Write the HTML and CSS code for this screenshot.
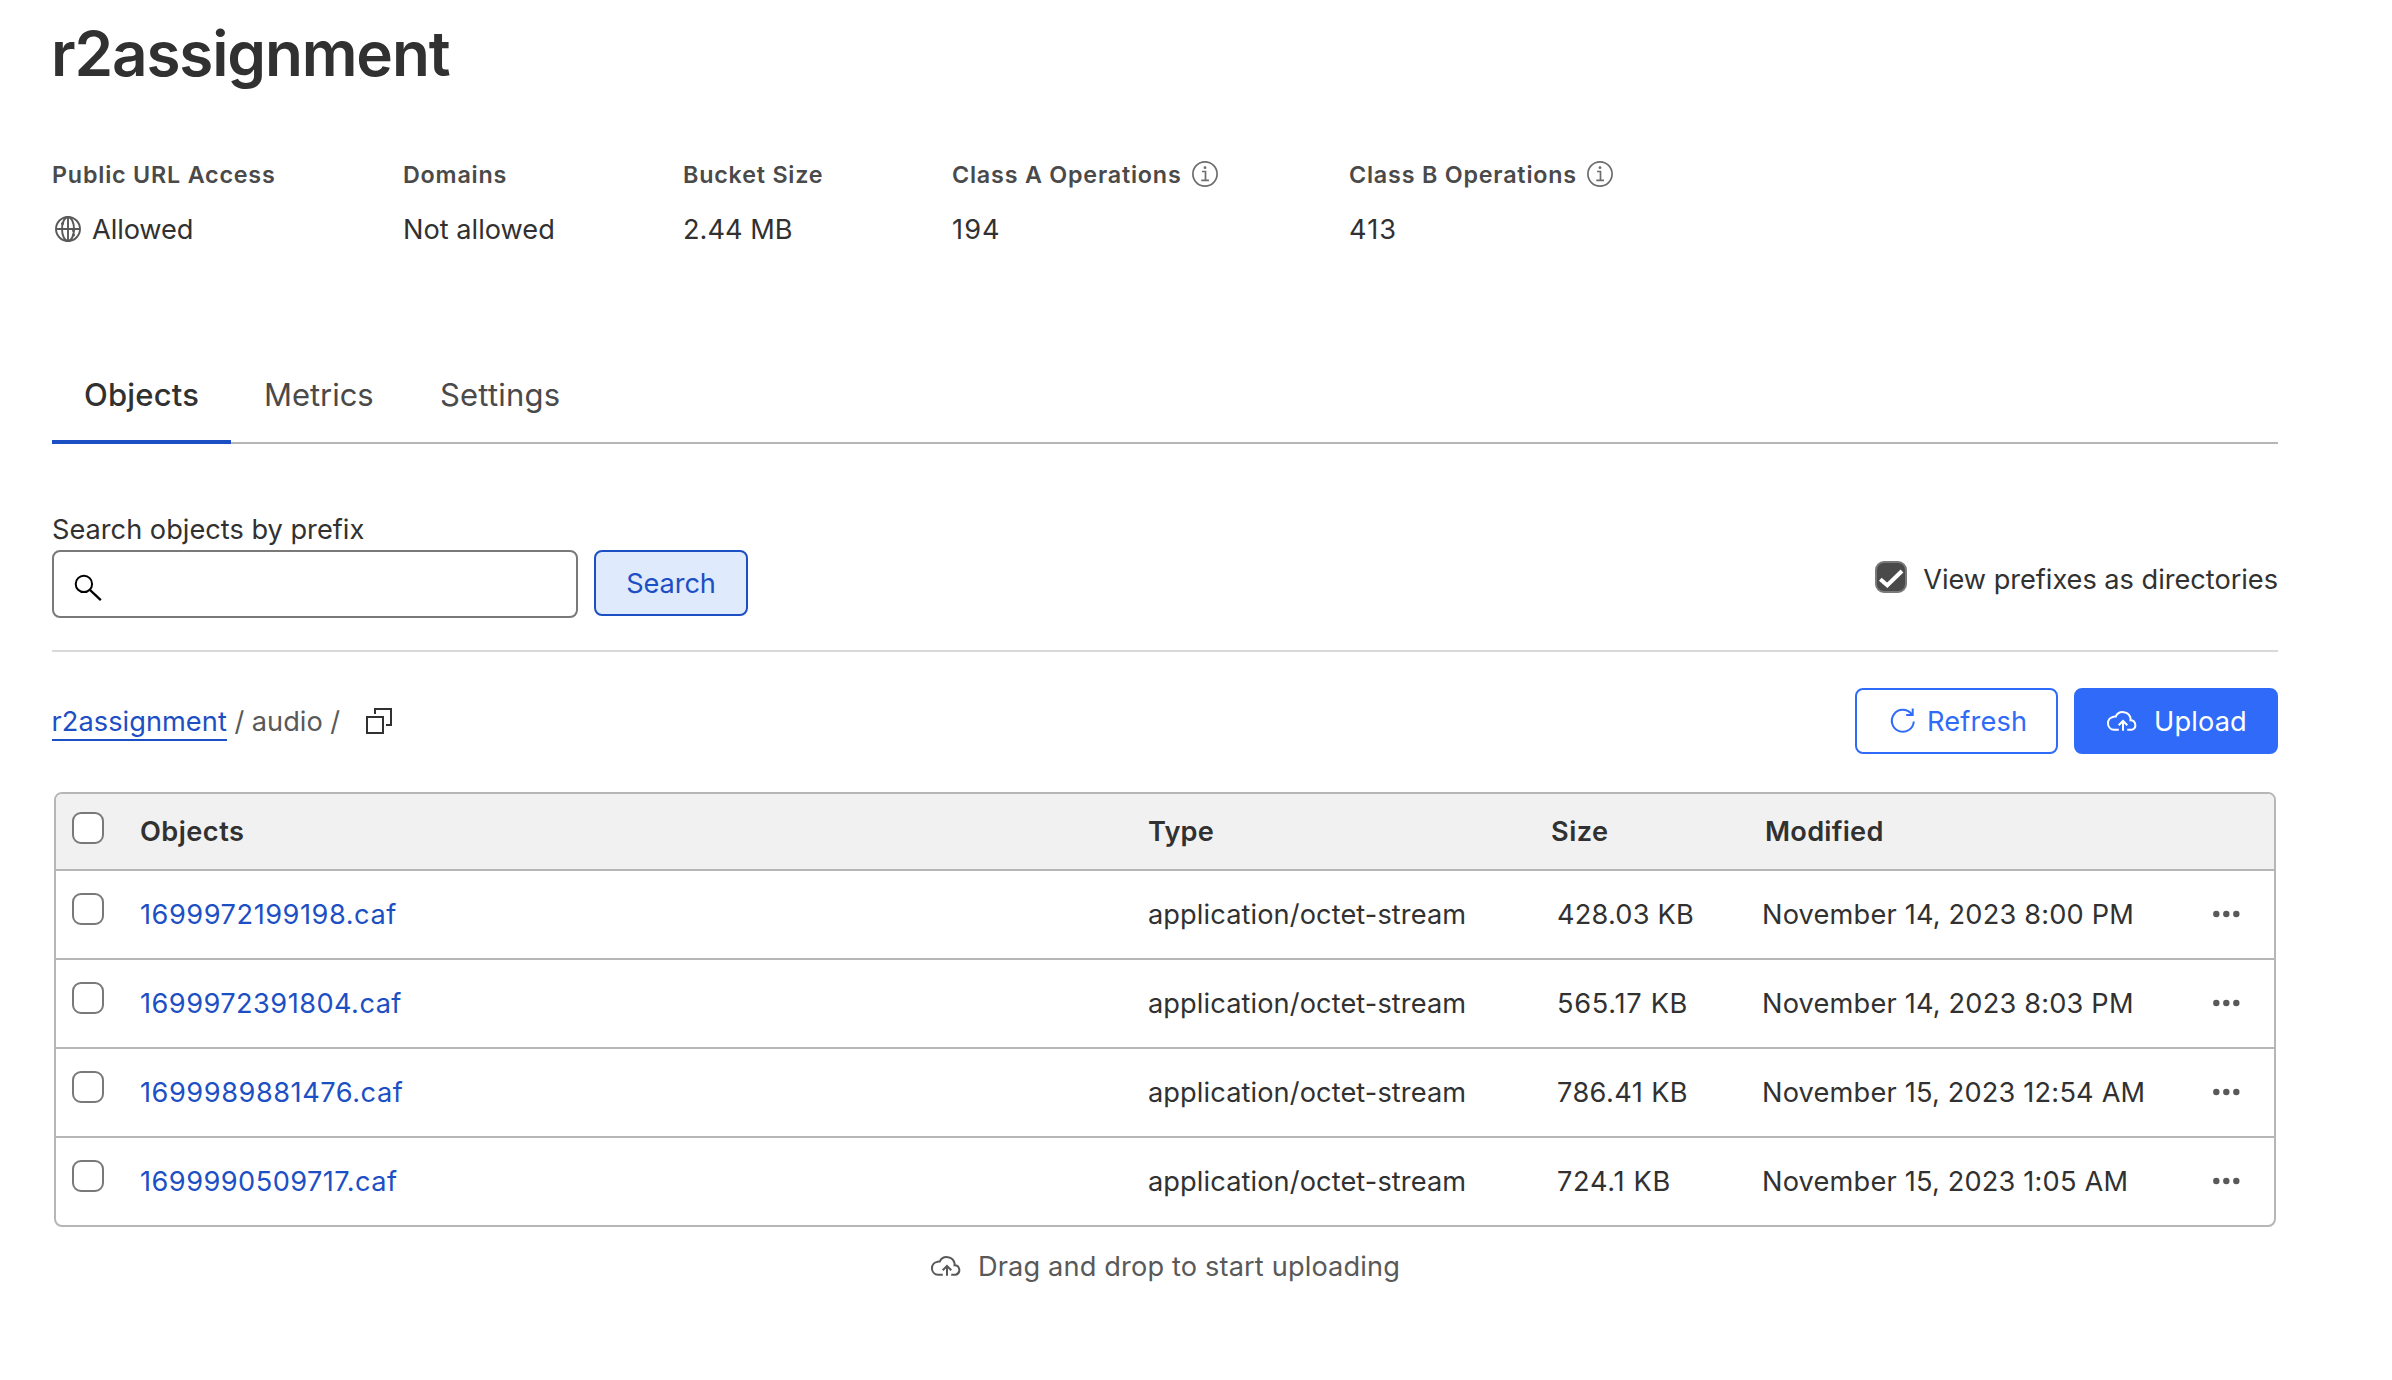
FILE: index.html
```html
<!DOCTYPE html>
<html lang="en">
<head>
<meta charset="utf-8">
<title>r2assignment</title>
<link rel="stylesheet" href="styles.css">
</head>
<body>
<svg class="defs" width="0" height="0" aria-hidden="true">
  <symbol id="cloud" viewBox="0 0 32 22">
    <path d="M12.800 19.800H8A6.600 6.600 0 0 1 7.600 6.700Q9 6.500 9.700 6.600A7.900 7.900 0 0 1 24.600 8.600L24.500 10.200A4.900 4.900 0 0 1 25.800 19.800H21.200M17 20.700V11M12.700 15.300L17 11L21.300 15.300" fill="none" stroke="currentColor" stroke-width="2"/>
  </symbol>
  <symbol id="info" viewBox="0 0 26 26">
    <circle cx="13" cy="13" r="12.100" fill="none" stroke="currentColor" stroke-width="1.700"/>
    <path d="M10 10.500H13.500V19.300M9.300 19.300H17" fill="none" stroke="currentColor" stroke-width="1.700"/>
    <circle cx="13" cy="6.700" r="1.400" fill="currentColor"/>
  </symbol>
  <symbol id="dots" viewBox="0 0 28 8">
    <g fill="currentColor"><circle cx="3.300" cy="4" r="3.200"/><circle cx="13.300" cy="4" r="3.200"/><circle cx="23.300" cy="4" r="3.200"/></g>
  </symbol>
</svg>
<main class="page">
  <h1 class="title">r2assignment</h1>

  <dl class="stats">
    <div class="stat"><dt>Public URL Access</dt>
      <dd class="with-globe"><svg class="globe" viewBox="0 0 26 26"><g fill="none" stroke="currentColor" stroke-width="1.900"><circle cx="13" cy="13" r="12"/><ellipse cx="13" cy="13" rx="6" ry="12"/><path d="M13 1V25M1 13H25"/></g><g fill="currentColor"><circle cx="7.500" cy="7.500" r="1.500"/><circle cx="18.500" cy="14.500" r="1.500"/><circle cx="18.500" cy="19" r="1.500"/></g></svg>Allowed</dd></div>
    <div class="stat"><dt>Domains</dt><dd>Not allowed</dd></div>
    <div class="stat"><dt>Bucket Size</dt><dd>2.44 MB</dd></div>
    <div class="stat"><dt>Class A Operations <svg class="info"><use href="#info"/></svg></dt><dd class="count">194</dd></div>
    <div class="stat"><dt>Class B Operations <svg class="info"><use href="#info"/></svg></dt><dd class="count">413</dd></div>
  </dl>

  <nav class="tabs">
    <a class="tab active">Objects</a>
    <a class="tab metrics">Metrics</a>
    <a class="tab">Settings</a>
  </nav>

  <section class="search">
    <div class="search-main">
      <label class="search-label" for="prefix">Search objects by prefix</label>
      <div class="search-row">
        <div class="field">
          <svg class="lens" viewBox="0 0 28 28"><g fill="none" stroke="currentColor" stroke-width="2"><circle cx="9.900" cy="9.900" r="8.200"/><path d="M15.500 15.500L26.800 26.200" stroke-width="2.400"/></g></svg>
          <input id="prefix" class="field-input" type="text">
        </div>
        <button class="btn btn-search">Search</button>
      </div>
    </div>
    <label class="toggle">
      <span class="check checked"><svg viewBox="0 0 28 28"><path d="M3.300 16.300L10.300 22.300L25 8" fill="none" stroke="#fff" stroke-width="4"/></svg></span>
      <span class="toggle-text">View prefixes as directories</span>
    </label>
  </section>

  <div class="actions">
    <div class="crumbs">
      <a class="crumb-link">r2assignment</a><span>/</span><span>audio</span><span>/</span>
      <svg class="copy" viewBox="0 0 26 26"><path d="M1 9H17V25H1ZM9 6V1H25V17H20" fill="none" stroke="currentColor" stroke-width="2"/></svg>
    </div>
    <div class="buttons">
      <button class="btn btn-refresh"><svg class="reload" viewBox="0 0 28 28"><path d="M22.500 7A11 11 0 1 0 24.800 14.500M23.700 1.500V8H17.200" fill="none" stroke="currentColor" stroke-width="2"/></svg>Refresh</button>
      <button class="btn btn-upload"><svg class="cloud"><use href="#cloud"/></svg>Upload</button>
    </div>
  </div>

  <div class="table">
    <div class="row head"><span class="check"></span><span>Objects</span><span class="type">Type</span><span class="size-head">Size</span><span class="modified">Modified</span></div>
    <div class="row"><span class="check"></span><a class="file">1699972199198.caf</a><span>application/octet-stream</span><span class="size">428.03 KB</span><span class="date">November 14, 2023 8:00 PM</span><svg class="dots"><use href="#dots"/></svg></div>
    <div class="row"><span class="check"></span><a class="file tight">1699972391804.caf</a><span>application/octet-stream</span><span class="size wide">565.17 KB</span><span class="date">November 14, 2023 8:03 PM</span><svg class="dots"><use href="#dots"/></svg></div>
    <div class="row"><span class="check"></span><a class="file">1699989881476.caf</a><span>application/octet-stream</span><span class="size mid">786.41 KB</span><span class="date">November 15, 2023 12:54 AM</span><svg class="dots"><use href="#dots"/></svg></div>
    <div class="row"><span class="check"></span><a class="file tight">1699990509717.caf</a><span>application/octet-stream</span><span class="size wide">724.1 KB</span><span class="date">November 15, 2023 1:05 AM</span><svg class="dots"><use href="#dots"/></svg></div>
  </div>

  <p class="drop"><svg class="cloud"><use href="#cloud"/></svg>Drag and drop to start uploading</p>
</main>
</body>
</html>
```
FILE: styles.css
```css
* { box-sizing: border-box; margin: 0; padding: 0; }
body {
  background: #fff;
  color: #313131;
  font: 400 27.2px/36px Inter, "Liberation Sans", sans-serif;
  white-space: nowrap;
}
svg { display: block; flex: none; }
.defs { position: absolute; }
.page { width: 2278px; padding: 14px 0 0 52px; }

.title { margin-left: -1px; font-size: 62px; line-height: 80px; font-weight: 600; letter-spacing: -1.15px; }

.stats { display: grid; grid-template-columns: 351px 280px 269px 397px auto; margin-top: 66px; }
.stat dt { display: flex; align-items: center; gap: 10.5px; height: 30px; font-size: 23.3px; font-weight: 600; letter-spacing: .8px; color: #4a4a4a; }
.stat dd { margin-top: 22px; letter-spacing: 0; }
.stat .count { letter-spacing: 1.1px; }
.stat .with-globe { display: flex; align-items: center; gap: 11px; padding-left: 3px; letter-spacing: -.1px; }
.globe { width: 26px; height: 26px; margin-top: -2px; color: #595959; }
.info { width: 26px; height: 26px; margin-top: -2px; color: #6d6d6d; }

.tabs { display: flex; height: 70px; margin-top: 126px; box-shadow: inset 0 -2px #b6b6b6; }
.tab { padding: 1px 32px 0; font-size: 31px; line-height: 40px; letter-spacing: .2px; color: #4a4a4a; }
.tab.active { width: 179px; font-weight: 500; color: #313131; border-bottom: 4px solid #1d4fc4; }
.tab.metrics { width: 177px; padding-left: 33px; letter-spacing: -.05px; }

.search { display: flex; justify-content: space-between; align-items: flex-start; height: 138px; margin-top: 70px; border-bottom: 2px solid #d9d9d9; }
.search-label { display: block; line-height: 32px; }
.search-row { display: flex; align-items: flex-start; gap: 16px; margin-top: 4px; }
.field { display: flex; align-items: center; width: 526px; height: 68px; padding: 7px 20px 0; border: 2px solid #797979; border-radius: 8px; }
.lens { width: 28px; height: 28px; color: #000; }
.field-input { flex: 1; min-width: 0; border: 0; outline: 0; background: none; font: inherit; }
.btn { display: flex; align-items: center; height: 66px; padding-top: 2px; border: 2px solid; border-radius: 8px; font: inherit; letter-spacing: .15px; }
.btn svg { margin-top: -2px; }
.btn-search { width: 154px; justify-content: center; color: #1d4fc4; background: #dfeafc; letter-spacing: -.1px; }
.toggle { display: flex; align-items: flex-start; gap: 16px; margin-top: 47px; }
.toggle-text { margin-top: 3px; line-height: 32px; letter-spacing: -.03px; }
.check { display: block; width: 32px; height: 32px; border: 2px solid #797979; border-radius: 9px; background: #fff; }
.check.checked { background: #4a4a4a; }
.checked svg { width: 28px; height: 28px; }

.actions { display: flex; justify-content: space-between; align-items: center; margin-top: 36px; }
.crumbs { display: flex; align-items: center; gap: 7.5px; padding-top: 2px; color: #595959; }
.crumb-link { width: 175px; margin-top: -2px; padding-top: 2px; line-height: 34px; letter-spacing: .05px; text-indent: -.5px; color: #1d4fc4; box-shadow: 0 2px #1d4fc4; }
.copy { width: 26px; height: 26px; margin: -2px 0 0 18px; color: #313131; }
.buttons { display: flex; gap: 16px; }
.btn-refresh { width: 203px; padding-left: 32px; gap: 10px; color: #2f6bf8; background: #fff; }
.reload { width: 28px; height: 28px; }
.btn-upload { width: 204px; padding-left: 30px; gap: 16px; color: #fff; background: #2f6bf8; border-color: #2f6bf8; }
.cloud { width: 32px; height: 22px; }

.table { margin: 38px 2px 0; border: 2px solid #b6b6b6; border-radius: 8px; overflow: hidden; }
.row { display: grid; grid-template-columns: 84px 1008px 402px 212px 451px 1fr; align-items: center; height: 89px; border-bottom: 2px solid #b6b6b6; letter-spacing: .1px; }
.row:last-child { height: 87px; border-bottom: 0; }
.row .check { align-self: start; margin: 22px 0 0 16px; }
.head { height: 77px; background: #f1f1f1; font-weight: 600; letter-spacing: .45px; }
.row.head .check { margin-top: 18px; }
.head .type { letter-spacing: .15px; }
.size-head { padding-left: 1px; }
.modified { padding-left: 3px; letter-spacing: .25px; }
.file { color: #1d4fc4; letter-spacing: .53px; }
.file.tight { letter-spacing: .45px; }
.size { padding-left: 7px; letter-spacing: .2px; }
.size.mid { letter-spacing: .4px; }
.size.wide { letter-spacing: .7px; }
.date { letter-spacing: .18px; }
.dots { width: 28px; height: 8px; margin-top: -2px; color: #595959; }

.drop { display: flex; justify-content: center; align-items: center; gap: 16px; margin-top: 22px; color: #595959; letter-spacing: .14px; }
.drop .cloud { margin-top: -2px; }
```
